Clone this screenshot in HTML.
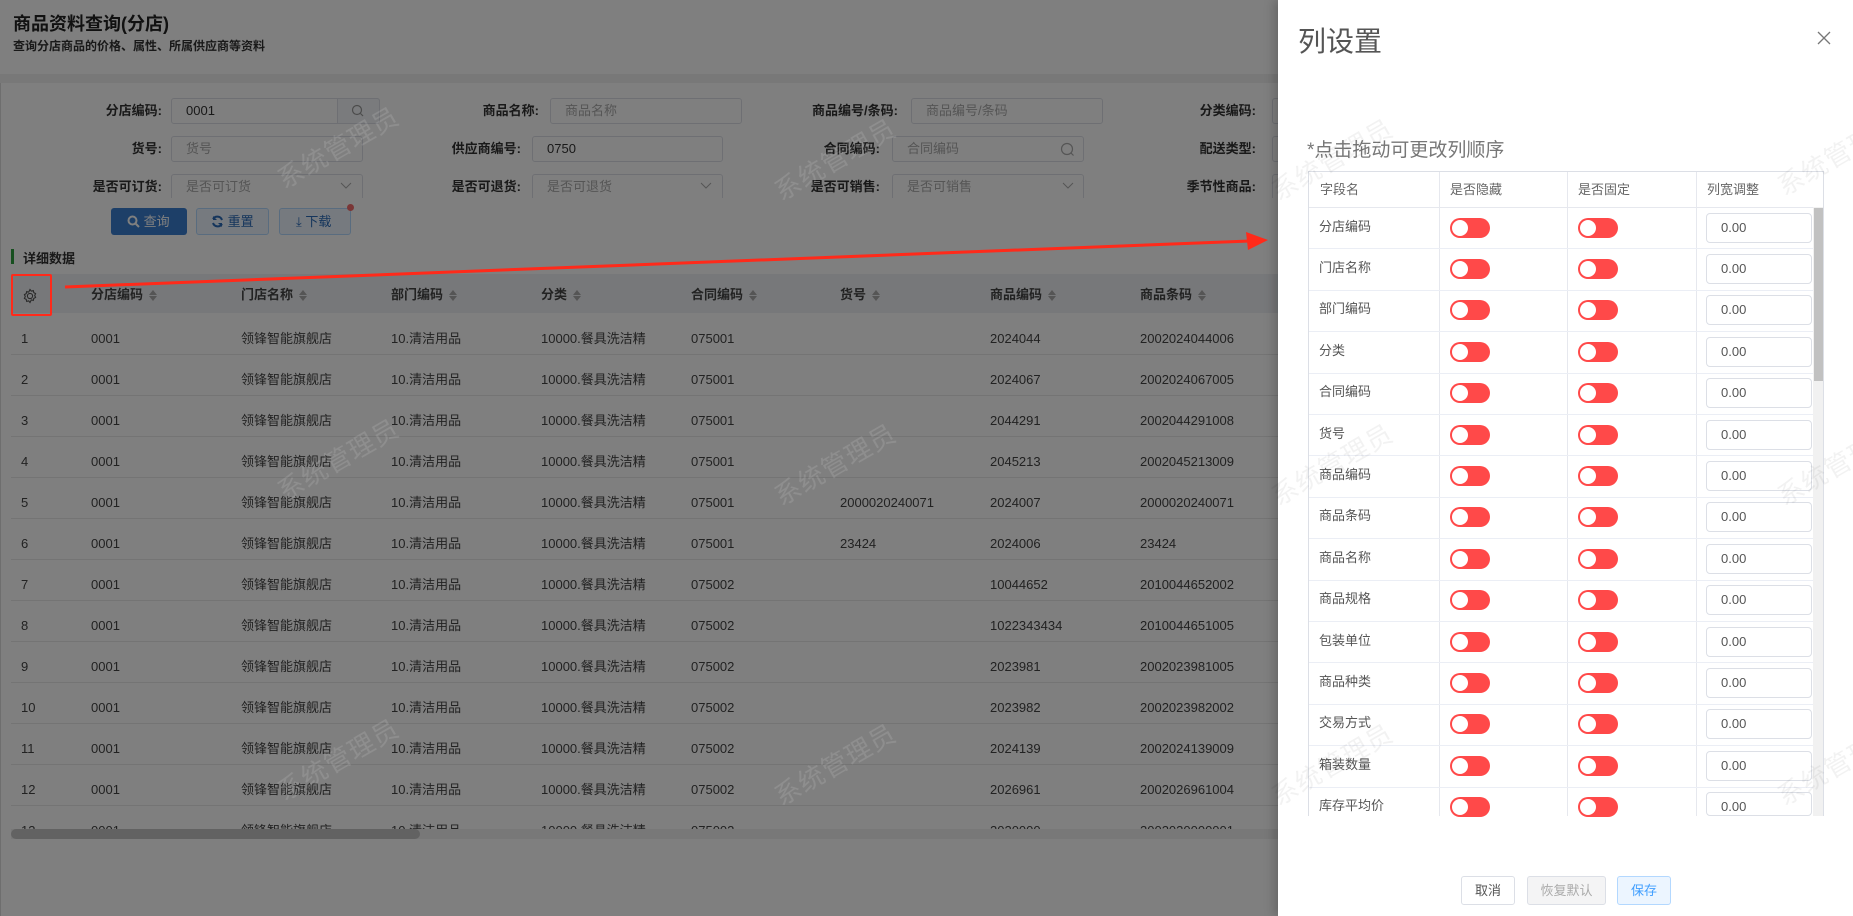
<!DOCTYPE html>
<html><head><meta charset="utf-8">
<style>
*{box-sizing:border-box;margin:0;padding:0}
body{width:1853px;height:916px;overflow:hidden;position:relative;background:#fff;font-family:"Liberation Sans","Noto Sans CJK SC",sans-serif;color:#333}
.a{position:absolute}
.lb{position:absolute;font-size:13px;font-weight:bold;color:#333;text-align:right;width:140px;line-height:26px}
.in{position:absolute;height:26px;border:1px solid #dcdfe6;border-radius:3px;background:#fff;font-size:13px;color:#aaa;padding-left:14px;line-height:24px}
.in.v{color:#333}
.th{position:absolute;font-size:13px;font-weight:bold;color:#444;top:286px;line-height:18px}
.sort{display:inline-block;margin-left:6px;vertical-align:middle;width:0;position:relative;top:-2px}
.sort:before{content:"";position:absolute;border:4px solid transparent;border-bottom:5px solid #aaa;top:-8px;left:0}
.sort:after{content:"";position:absolute;border:4px solid transparent;border-top:5px solid #aaa;top:2px;left:0}
.td{position:absolute;font-size:13px;color:#444;line-height:18px;height:18px}
.rl{position:absolute;left:11px;width:1267px;height:1px;background:#e8e8e8}
.wm{position:absolute;font-size:26px;transform:rotate(-30deg);white-space:nowrap;letter-spacing:1px}
.pc{position:absolute;font-size:13px;color:#555;line-height:18px}
.tg{position:absolute;width:40px;height:20px;border-radius:10px;background:#ff4949}
.tg:after{content:"";position:absolute;left:2px;top:2px;width:16px;height:16px;border-radius:50%;background:#fff}
.pi{position:absolute;left:1706px;width:106px;height:30px;border:1px solid #dcdfe6;border-radius:4px;font-size:13px;color:#555;padding-left:14px;line-height:28px}
.btn{position:absolute;top:876px;height:29px;border:1px solid #dcdfe6;border-radius:3px;font-size:13px;text-align:center;line-height:27px;color:#555;background:#fff}
</style></head><body>

<div class="a" style="left:0;top:0;width:1278px;height:916px;background:#f0f0f0"></div>
<div class="a" style="left:0;top:0;width:1278px;height:74px;background:#fff"></div>
<div class="a" style="left:13px;top:10px;font-size:18px;font-weight:bold;color:#222">商品资料查询(分店)</div>
<div class="a" style="left:13px;top:37px;font-size:12px;font-weight:bold;color:#333">查询分店商品的价格、属性、所属供应商等资料</div>
<div class="a" style="left:0;top:83px;width:1278px;height:833px;background:#fff"></div>

<div class="lb" style="left:22px;top:98px">分店编码:</div>
<div class="in v" style="left:171px;top:98px;width:209px">0001</div>
<div class="a" style="left:337px;top:98px;width:43px;height:26px;border:1px solid #dcdfe6;background:#f5f7fa;border-radius:0 3px 3px 0"></div>
<svg class="a" style="left:351px;top:104px" width="14" height="14" viewBox="0 0 14 14"><circle cx="6" cy="6" r="4.5" fill="none" stroke="#999" stroke-width="1.2"/><path d="M9.5 9.5L12 12" stroke="#999" stroke-width="1.2"/></svg>
<div class="lb" style="left:399px;top:98px">商品名称:</div>
<div class="in" style="left:550px;top:98px;width:192px">商品名称</div>
<div class="lb" style="left:758px;top:98px">商品编号/条码:</div>
<div class="in" style="left:911px;top:98px;width:192px">商品编号/条码</div>
<div class="lb" style="left:1116px;top:98px">分类编码:</div>
<div class="in" style="left:1272px;top:98px;width:100px"></div>
<div class="lb" style="left:22px;top:136px">货号:</div>
<div class="in" style="left:171px;top:136px;width:192px">货号</div>
<div class="lb" style="left:381px;top:136px">供应商编号:</div>
<div class="in v" style="left:532px;top:136px;width:191px">0750</div>
<div class="lb" style="left:740px;top:136px">合同编码:</div>
<div class="in" style="left:892px;top:136px;width:192px">合同编码</div>
<svg class="a" style="left:1060px;top:142px" width="15" height="15" viewBox="0 0 15 15"><circle cx="7" cy="7" r="5.5" fill="none" stroke="#aaa" stroke-width="1.2"/><path d="M11 11L13.5 13.5" stroke="#aaa" stroke-width="1.2"/></svg>
<div class="lb" style="left:1116px;top:136px">配送类型:</div>
<div class="in" style="left:1272px;top:136px;width:100px">配</div>
<div class="a" style="left:0;top:174px;width:1278px;height:24px;overflow:hidden">
<div class="lb" style="left:22px;top:0">是否可订货:</div>
<div class="in" style="left:171px;top:0;width:192px;height:30px">是否可订货</div>
<div class="lb" style="left:381px;top:0">是否可退货:</div>
<div class="in" style="left:532px;top:0;width:191px;height:30px">是否可退货</div>
<div class="lb" style="left:740px;top:0">是否可销售:</div>
<div class="in" style="left:892px;top:0;width:192px;height:30px">是否可销售</div>
<div class="lb" style="left:1116px;top:0">季节性商品:</div>
<div class="in" style="left:1272px;top:0;width:100px;height:30px">季</div>
<svg class="a" style="left:340px;top:8px" width="12" height="8"><path d="M1 1L6 6L11 1" fill="none" stroke="#aaa"/></svg>
<svg class="a" style="left:700px;top:8px" width="12" height="8"><path d="M1 1L6 6L11 1" fill="none" stroke="#aaa"/></svg>
<svg class="a" style="left:1062px;top:8px" width="12" height="8"><path d="M1 1L6 6L11 1" fill="none" stroke="#aaa"/></svg>
</div>
<div class="a" style="left:111px;top:208px;width:76px;height:27px;background:#3a7fd0;border-radius:3px;color:#fff;font-size:13px;line-height:27px;padding-left:16px">
<svg style="vertical-align:middle;margin-top:-3px" width="13" height="13" viewBox="0 0 13 13"><circle cx="5.5" cy="5.5" r="4" fill="none" stroke="#fff" stroke-width="2"/><path d="M8.5 8.5L12 12" stroke="#fff" stroke-width="2"/></svg> 查询</div>
<div class="a" style="left:196px;top:208px;width:73px;height:27px;background:#ecf5ff;border:1px solid #b3d8ff;border-radius:3px;color:#2a6ab8;font-size:13px;line-height:25px;padding-left:14px">
<svg style="vertical-align:middle;margin-top:-3px" width="13" height="13" viewBox="0 0 13 13"><path d="M11 5A5 5 0 0 0 2 4M2 8A5 5 0 0 0 11 9" fill="none" stroke="#2a6ab8" stroke-width="2"/><path d="M2 1v4h4M11 12V8H7" fill="#2a6ab8"/></svg> 重置</div>
<div class="a" style="left:279px;top:208px;width:72px;height:27px;background:#ecf5ff;border:1px solid #b3d8ff;border-radius:3px;color:#2a6ab8;font-size:13px;line-height:25px;padding-left:16px">⤓ 下载</div>
<div class="a" style="left:347px;top:204px;width:7px;height:7px;border-radius:50%;background:#f56c6c"></div>
<div class="a" style="left:11px;top:249px;width:3px;height:15px;background:#2e9e3e"></div>
<div class="a" style="left:23px;top:248px;font-size:13px;font-weight:bold;color:#333">详细数据</div>
<div class="a" style="left:11px;top:274px;width:1267px;height:39px;background:#eef0f4"></div>
<svg class="a" style="left:22px;top:288px" width="16" height="16" viewBox="0 0 16 16"><circle cx="8" cy="8" r="2.6" fill="none" stroke="#555" stroke-width="1.1"/><path d="M8 1.5l1.3 1.6 2-.5.5 2 1.8 1-.9 1.9.9 1.9-1.8 1-.5 2-2-.5L8 14.5l-1.3-1.6-2 .5-.5-2-1.8-1 .9-1.9-.9-1.9 1.8-1 .5-2 2 .5z" fill="none" stroke="#555" stroke-width="1.1"/></svg>
<div class="th" style="left:91px">分店编码<span class="sort"></span></div>
<div class="th" style="left:241px">门店名称<span class="sort"></span></div>
<div class="th" style="left:391px">部门编码<span class="sort"></span></div>
<div class="th" style="left:541px">分类<span class="sort"></span></div>
<div class="th" style="left:691px">合同编码<span class="sort"></span></div>
<div class="th" style="left:840px">货号<span class="sort"></span></div>
<div class="th" style="left:990px">商品编码<span class="sort"></span></div>
<div class="th" style="left:1140px">商品条码<span class="sort"></span></div>

<div class="a" style="left:0;top:313px;width:1278px;height:517px;overflow:hidden">
<div id="lt" style="position:relative;top:-313px"></div></div>
<script>
var d=[["2024044","2002024044006",""],["2024067","2002024067005",""],["2044291","2002044291008",""],["2045213","2002045213009",""],["2024007","2000020240071","2000020240071"],["2024006","23424","23424"],["10044652","2010044652002",""],["1022343434","2010044651005",""],["2023981","2002023981005",""],["2023982","2002023982002",""],["2024139","2002024139009",""],["2026961","2002026961004",""],["2020000","2002020000001",""]],s="";
for(var i=0;i<13;i++){var y=330+i*41;if(i>0)s+='<div class="rl" style="top:'+(313+i*41)+'px"></div>';
var r=[[21,i+1],[91,"0001"],[241,"领锋智能旗舰店"],[391,"10.清洁用品"],[541,"10000.餐具洗洁精"],[691,i<6?"075001":"075002"],[840,d[i][2]],[990,d[i][0]],[1140,d[i][1]]];
for(var j=0;j<r.length;j++)s+='<div class="td" style="left:'+r[j][0]+'px;top:'+y+'px">'+r[j][1]+'</div>';}
document.getElementById("lt").innerHTML=s;
</script>
<div class="a" style="left:11px;top:829px;width:1267px;height:10px;background:#f0f0f0"></div>
<div class="a" style="left:11px;top:829px;width:409px;height:10px;background:#c4c4c4;border-radius:5px"></div>
<div class="a" style="left:0;top:83px;width:1px;height:833px;background:#ddd"></div>

<div class="a" style="left:0;top:0;width:1278px;height:916px;background:rgba(0,0,0,0.5)"></div>

<div class="a" style="left:11px;top:274px;width:41px;height:42px;border:2px solid #ff2a1a;border-radius:2px"></div>
<svg class="a" style="left:0;top:0" width="1280" height="320"><path d="M65 287L1250 241" stroke="#ff2a1a" stroke-width="3"/><path d="M1268 240L1246 232L1248 250Z" fill="#ff2a1a"/></svg>

<div class="a" style="left:1278px;top:0;width:575px;height:916px;background:#fff;box-shadow:-4px 0 10px rgba(0,0,0,0.2)"></div>
<div class="a" style="left:1298px;top:20px;font-size:28px;color:#555">列设置</div>
<svg class="a" style="left:1817px;top:31px" width="14" height="14"><path d="M1 1L13 13M13 1L1 13" stroke="#777" stroke-width="1.3"/></svg>
<div class="a" style="left:1307px;top:135px;font-size:19px;color:#777">*点击拖动可更改列顺序</div>

<div class="a" style="left:1308px;top:171px;width:516px;height:645px;border:1px solid #dcdfe6;border-bottom:none;overflow:hidden">
<div class="a" style="left:0;top:35px;width:516px;height:1px;background:#e6e8ee"></div>
<div class="a" style="left:130px;top:0;width:1px;height:645px;background:#e6e8ee"></div>
<div class="a" style="left:258px;top:0;width:1px;height:645px;background:#e6e8ee"></div>
<div class="a" style="left:387px;top:0;width:1px;height:645px;background:#e6e8ee"></div>
<div class="pc" style="left:11px;top:9px;color:#666">字段名</div>
<div class="pc" style="left:141px;top:9px;color:#666">是否隐藏</div>
<div class="pc" style="left:269px;top:9px;color:#666">是否固定</div>
<div class="pc" style="left:398px;top:9px;color:#666">列宽调整</div>
<div class="a" style="left:504px;top:35px;width:11px;height:610px;background:#f1f1f1"></div>
<div class="a" style="left:505px;top:36px;width:9px;height:173px;background:#c1c1c1"></div>
</div>
<div id="rows"></div>
<script>
var f=["分店编码","门店名称","部门编码","分类","合同编码","货号","商品编码","商品条码","商品名称","商品规格","包装单位","商品种类","交易方式","箱装数量","库存平均价"],h="";
for(var i=0;i<f.length;i++){var t=207+i*41.4;
if(i>0)h+='<div class="a" style="left:1309px;top:'+Math.round(t)+'px;width:504px;height:1px;background:#ebeef5"></div>';
if(t+20>816)continue;
var c=Math.round(t+20.5);
h+='<div class="pc" style="left:1319px;top:'+(c-10)+'px">'+f[i]+'</div>';
h+='<div class="tg" style="left:1450px;top:'+(c-10)+'px"></div><div class="tg" style="left:1578px;top:'+(c-10)+'px"></div>';
var ih=Math.min(30,816-(c-15));
h+='<div class="pi" style="top:'+(c-15)+'px;height:'+ih+'px;overflow:hidden">0.00</div>';}
document.getElementById("rows").innerHTML=h;
</script>
<div class="btn" style="left:1461px;width:54px">取消</div>
<div class="btn" style="left:1527px;width:79px;background:#f4f4f5;color:#aaa">恢复默认</div>
<div class="btn" style="left:1617px;width:54px;background:#ecf5ff;border-color:#b3d8ff;color:#409eff">保存</div>

<div class="wm" style="left:270px;top:128px;color:rgba(255,255,255,0.12)">系统管理员</div>
<div class="wm" style="left:767px;top:140px;color:rgba(255,255,255,0.12)">系统管理员</div>
<div class="wm" style="left:270px;top:440px;color:rgba(255,255,255,0.12)">系统管理员</div>
<div class="wm" style="left:767px;top:445px;color:rgba(255,255,255,0.12)">系统管理员</div>
<div class="wm" style="left:270px;top:740px;color:rgba(255,255,255,0.12)">系统管理员</div>
<div class="wm" style="left:767px;top:745px;color:rgba(255,255,255,0.12)">系统管理员</div>
<div class="wm" style="left:1264px;top:140px;color:rgba(0,0,0,0.05)">系统管理员</div>
<div class="wm" style="left:1264px;top:445px;color:rgba(0,0,0,0.05)">系统管理员</div>
<div class="wm" style="left:1264px;top:745px;color:rgba(0,0,0,0.05)">系统管理员</div>
<div class="wm" style="left:1770px;top:135px;color:rgba(0,0,0,0.05)">系统管理员</div>
<div class="wm" style="left:1770px;top:445px;color:rgba(0,0,0,0.05)">系统管理员</div>
<div class="wm" style="left:1770px;top:745px;color:rgba(0,0,0,0.05)">系统管理员</div>
</body></html>
